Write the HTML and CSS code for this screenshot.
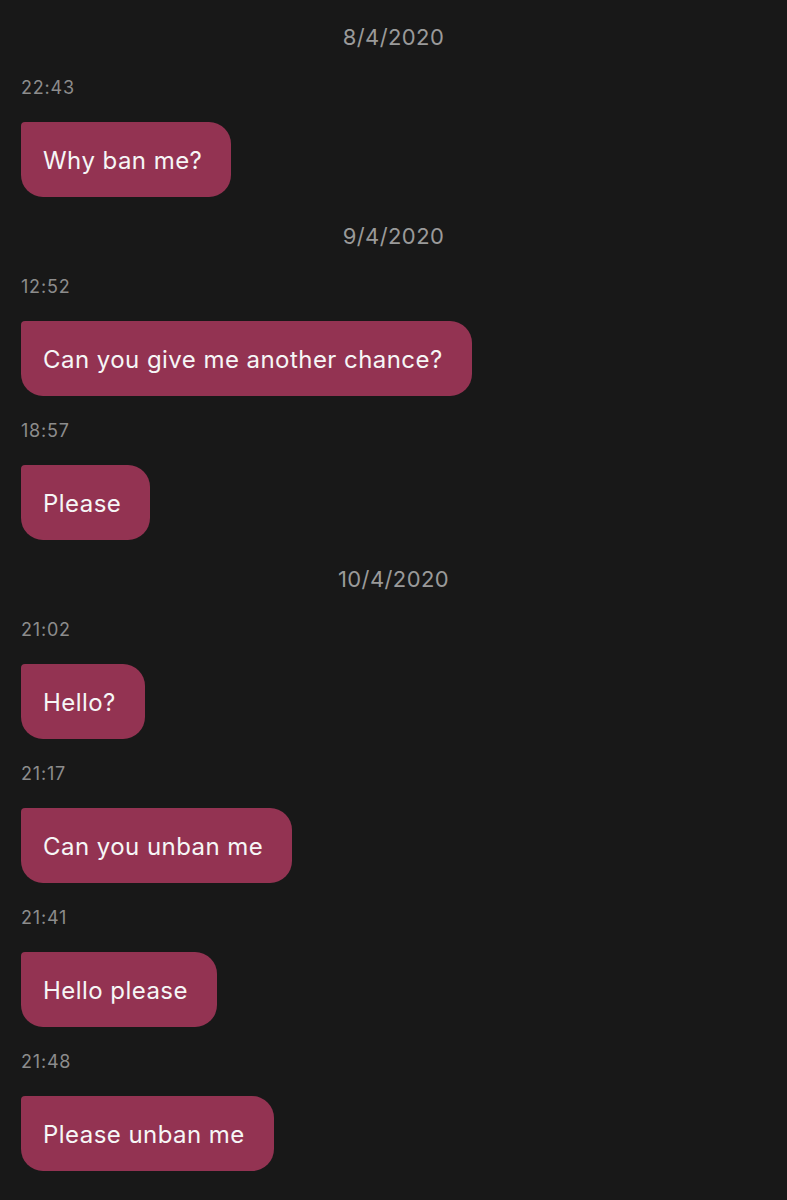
FILE: index.html
```html
<!doctype html>
<html>

<head>
	<meta charset="UTF-8">
	<title>Messages</title>
	<link rel="stylesheet" href="styles.css">
</head>

<body>
	<div class="chat">
		<div class="date">8/4/2020</div>
		<div class="time">22:43</div>
		<div class="bubble">Why ban me?</div>

		<div class="date">9/4/2020</div>
		<div class="time">12:52</div>
		<div class="bubble">Can you give me another chance?</div>
		<div class="time">18:57</div>
		<div class="bubble">Please</div>

		<div class="date">10/4/2020</div>
		<div class="time">21:02</div>
		<div class="bubble">Hello?</div>
		<div class="time">21:17</div>
		<div class="bubble">Can you unban me</div>
		<div class="time">21:41</div>
		<div class="bubble">Hello please</div>
		<div class="time">21:48</div>
		<div class="bubble">Please unban me</div>
	</div>
</body>

</html>
```

FILE: styles.css
```css
html,
body {
	margin: 0;
	background: #181818;
}

body {
	font-family: Inter, "Liberation Sans", sans-serif;
	height: 1200px;
	overflow: hidden;
}

.chat {
	display: flex;
	flex-direction: column;
	align-items: flex-start;
	padding: 22px 0 0 21px;
}

.date {
	align-self: stretch;
	margin-left: -21px;
	text-align: center;
	color: #9a9a9a;
	font-size: 22px;
	letter-spacing: 0.4px;
	line-height: 30px;
	height: 30px;
}

.bubble + .date {
	margin-top: 24px;
}

.time {
	color: #8c8c8c;
	font-size: 18px;
	letter-spacing: 0.8px;
	line-height: 20px;
	height: 20px;
	margin-top: 25px;
}

.date + .time {
	margin-top: 26px;
}

.bubble {
	margin-top: 24px;
	height: 75px;
	line-height: 78px;
	padding: 0 29px 0 22px;
	background: #933352;
	color: #f6f6f6;
	font-size: 24px;
	letter-spacing: 0.45px;
	border-radius: 4px 22px 22px 22px;
	white-space: nowrap;
}
```
